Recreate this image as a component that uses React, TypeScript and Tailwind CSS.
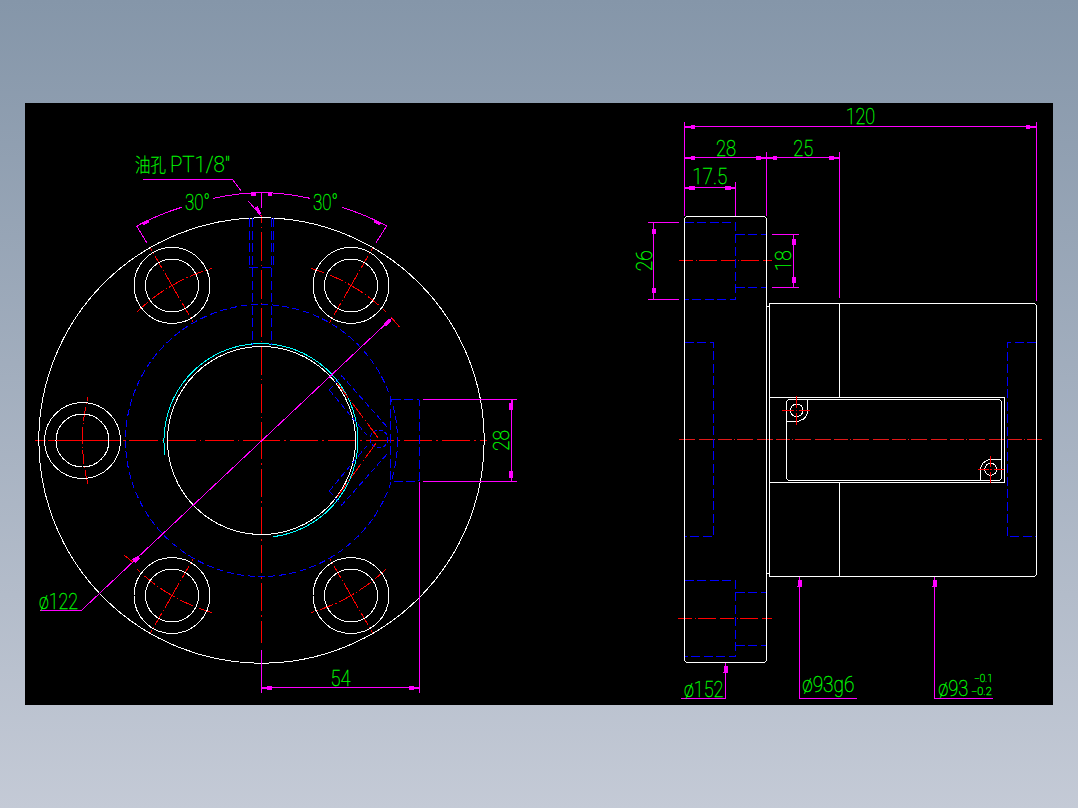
import React from "react";

const WHITE = "#ffffff";
const RED = "#ff0000";
const BLUE = "#0000ff";
const MAG = "#ff00ff";
const CY = "#00ffff";
const GREEN = "#00ff00";
const CX = 261.5;
const CY0 = 440.5;
const CENTER = "28.5 4 1.5 4";
const SHORT = "14 2.5 1 2.5";
const HID = "9 3.5";

type P = [number, number];
function Line({ p, c, d, o }: { p: P[]; c: string; d?: string; o?: number }) {
  return (
    <polyline
      points={p.map((q) => q.join(",")).join(" ")}
      fill="none"
      stroke={c}
      strokeWidth={1}
      strokeDasharray={d}
      strokeDashoffset={o}
    />
  );
}
function H({ x, y, c = MAG, d }: { x: [number, number]; y: number; c?: string; d?: string }) {
  return <Line p={[[x[0], y], [x[1], y]]} c={c} d={d} />;
}
function V({ x, y, c = MAG, d }: { x: number; y: [number, number]; c?: string; d?: string }) {
  return <Line p={[[x, y[0]], [x, y[1]]]} c={c} d={d} />;
}
// arrow: a slab plus a thicker stem running to the tip
function HS({ x1, x2, y, tip }: { x1: number; x2: number; y: number; tip?: number }) {
  return (
    <g>
      <rect x={x1} y={y - 2} width={x2 - x1} height={4} fill={MAG} />
      {tip !== undefined && (
        <rect x={Math.min(tip, x1)} y={y - 0.5} width={Math.abs(tip < x1 ? x1 - tip : tip - x2) + (tip < x1 ? 0 : x2 - x1)} height={2} fill={MAG} />
      )}
    </g>
  );
}
function VS({ x, y1, y2, tip }: { x: number; y1: number; y2: number; tip?: number }) {
  return (
    <g>
      <rect x={x - 2} y={y1} width={4} height={y2 - y1} fill={MAG} />
      {tip !== undefined && (
        <rect x={x - 0.5} y={Math.min(tip, y1)} width={2} height={tip < y1 ? y1 - tip : tip - y1} fill={MAG} />
      )}
    </g>
  );
}
function T({ x, y, w, s = 22, children, rot }: { x: number; y: number; w: number; s?: number; children: string; rot?: boolean }) {
  return (
    <text
      x={x}
      y={y}
      fontSize={s}
      fill={GREEN}
      stroke={GREEN}
      strokeWidth={0.3}
      textLength={w}
      lengthAdjust="spacingAndGlyphs"
      transform={rot ? `rotate(-90 ${x + w / 2} ${y})` : undefined}
    >
      {children}
    </text>
  );
}

function polar(r: number, deg: number): P {
  const a = (deg * Math.PI) / 180;
  return [CX + r * Math.cos(a), CY0 + r * Math.sin(a)];
}
function Arc({ r, a, b, c, d }: { r: number; a: number; b: number; c: string; d?: string }) {
  const s = polar(r, a);
  const e = polar(r, b);
  return (
    <path
      d={`M${s[0]} ${s[1]}A${r} ${r} 0 ${Math.abs(b - a) > 180 ? 1 : 0} 1 ${e[0]} ${e[1]}`}
      fill="none"
      stroke={c}
      strokeWidth={1}
      strokeDasharray={d}
    />
  );
}

function Bolt({ deg }: { deg: number }) {
  const [x, y] = polar(179, deg);
  const a = polar(135.5, deg);
  const b = polar(223, deg);
  return (
    <g>
      <Line p={[polar(179, deg), a]} c={RED} d={SHORT} />
      <Line p={[polar(179, deg), b]} c={RED} d={SHORT} />
      <Arc r={179} a={deg} b={deg + 14} c={RED} d={SHORT} />
      <Arc r={179} a={deg - 14} b={deg} c={RED} d="14 2.5 1 2.5" />
      <circle cx={x} cy={y} r={26.5} fill="none" stroke={WHITE} />
      <circle cx={x} cy={y} r={38} fill="none" stroke={WHITE} />
    </g>
  );
}

function FrontView() {
  const m = (y: number) => 2 * CY0 - y;
  return (
    <g>
      <Line p={[[CX, CY0], [486.7, CY0]]} c={RED} d={CENTER} o={10} />
      <Line p={[[CX, CY0], [35, CY0]]} c={RED} d={CENTER} o={10} />
      <Line p={[[CX, CY0], [CX, 215]]} c={RED} d={CENTER} o={10} />
      <Line p={[[CX, CY0], [CX, 643]]} c={RED} d={CENTER} o={10} />

      {[-120, -60, 180, 120, 60].map((d) => (
        <Bolt key={d} deg={d} />
      ))}
      <Line p={[[390.7, 316.7], [399.3, 326.7]]} c={RED} />
      <Line p={[[124, 555], [133, 562.3]]} c={RED} />

      <circle cx={CX} cy={CY0} r={222.7} fill="none" stroke={WHITE} />
      <circle cx={CX} cy={CY0} r={94} fill="none" stroke={WHITE} />
      <path d="M165 455A97 97 0 1 1 273 536.8" fill="none" stroke={CY} />
      <circle cx={CX} cy={CY0} r={136} fill="none" stroke={BLUE} strokeDasharray="7 3.5" />

      {/* oil hole, top */}
      <V x={249} y={[218, 267.7]} c={BLUE} d={HID} />
      <V x={252.3} y={[218, 345]} c={BLUE} d={HID} />
      <V x={271} y={[218, 345]} c={BLUE} d={HID} />
      <V x={273.7} y={[218, 267.7]} c={BLUE} d={HID} />
      <H x={[249, 273.7]} y={267.7} c={BLUE} d={HID} />

      {/* oil hole, right */}
      <Line p={[[391.7, 399.3], [418, 399.3], [419.7, 401], [419.7, 480], [418, 481.3], [391.7, 481.3]]} c={BLUE} d={HID} />
      <V x={390.5} y={[396, 485]} c={BLUE} d={HID} />
      {[1, 0].map((k) => {
        const f = (y: number) => (k ? y : m(y));
        return (
          <g key={k}>
            <Line p={[[329.3, f(390)], [341.7, f(375.7)], [388.3, f(428.3)]]} c={BLUE} d="6 3" />
            <Line p={[[329.3, f(390)], [366.7, f(435)]]} c={BLUE} d="6 3" />
          </g>
        );
      })}
      <circle cx={379} cy={439} r={9} fill="none" stroke={BLUE} strokeDasharray="4 2" />
      <Line p={[[337.3, 383.3], [379, 439], [337.3, 496.7]]} c={RED} d="18 3 1 3" />

      {/* Ø122 */}
      <Line p={[[392, 318], [81, 610.8], [40, 610.8]]} c={MAG} />
      <polygon points="384,323 389,318.6 391,321 386,326.5" fill={MAG} />
      <polygon points="132,559 138,556 140,558.6 135,563" fill={MAG} />
      <T x={39} y={609} w={39}>ø122</T>

      {/* 28 */}
      <H x={[423, 517]} y={399.3} />
      <H x={[423, 517]} y={481.3} />
      <V x={511.3} y={[399.3, 481.3]} />
      <VS x={511.3} y1={403} y2={410} tip={400} />
      <VS x={511.3} y1={471} y2={478} />
      <T x={498.5} y={440.6} w={21} rot>28</T>

      {/* 54 */}
      <V x={419.3} y={[482, 693.3]} />
      <V x={261.5} y={[650, 693]} />
      <H x={[261.5, 419.3]} y={687.7} />
      <HS x1={267.3} x2={272} y={687.7} tip={262} />
      <HS x1={409} x2={414} y={687.7} tip={419} />
      <T x={330.5} y={685.7} w={20}>54</T>

      {/* 30° */}
      <V x={261.5} y={[192.5, 208]} />
      <path d="M213.3 198.3A248 248 0 0 1 261.5 192.5A248 248 0 0 1 310 198.3" fill="none" stroke={MAG} />
      <path d="M181.7 207.3A248 248 0 0 0 136.7 226" fill="none" stroke={MAG} />
      <path d="M341.7 207.3A248 248 0 0 1 386.7 226" fill="none" stroke={MAG} />
      <Line p={[[136.7, 226], [146.7, 242.7]]} c={MAG} />
      <Line p={[[386.7, 226], [376, 242.7]]} c={MAG} />
      <rect x={251} y={192} width={4.7} height={3.7} fill={MAG} />
      <rect x={267.7} y={192} width={4.7} height={3.7} fill={MAG} />
      <polygon points="142,223 148,219.5 149.5,222 143.5,225.5" fill={MAG} />
      <polygon points="375,219.5 381,223 379.5,225.5 373.5,222" fill={MAG} />
      <T x={185} y={210} w={25}>30°</T>
      <T x={313} y={210} w={25}>30°</T>

      {/* oil note */}
      <Line p={[[143.3, 179.3], [232.3, 179.3], [241, 190.7]]} c={MAG} />
      <Line p={[[248.3, 201], [261, 216]]} c={MAG} />
      <polygon points="254.5,208 257.5,206 261,213 260,215.5" fill={MAG} />
      <T x={135} y={171.7} w={31} s={19}>油孔</T>
      <T x={170} y={171.7} w={60}>PT1/8"</T>
    </g>
  );
}

function SideView() {
  return (
    <g>
      {/* center lines */}
      <H x={[679, 1041.7]} y={439.3} c="#e01818" d="16 3.5 16 3.5 14 2 1 2" />
      <H x={[679, 771.7]} y={260.3} c={RED} d={SHORT + " 18 4"} />
      <H x={[678, 771.7]} y={618.3} c={RED} d={SHORT + " 18 4"} />

      {/* flange */}
      <path d="M686.5 216.5H764.5L766.5 218.5V660.5L764.5 662.5H686.5L684.5 660.5V218.5Z" fill="none" stroke={WHITE} />
      {/* body */}
      <path d="M769.5 303.5H1034.5L1036.5 305.5V574.5L1034.5 576.5H769.5Z" fill="none" stroke={WHITE} />
      <H x={[766.5, 769.5]} y={306.5} c={WHITE} />
      <H x={[766.5, 769.5]} y={573.5} c={WHITE} />
      <V x={839.5} y={[303.5, 397.5]} c={WHITE} />
      <V x={839.5} y={[482.5, 576.5]} c={WHITE} />
      <path d="M769.5 397.5H1004.5V482.5H769.5" fill="none" stroke={WHITE} />
      <path d="M788.5 399.5H999.5L1001.5 401.5V478.5L999.5 480.5H788.5L786.5 478.5V401.5Z" fill="none" stroke={WHITE} />
      {/* keys */}
      <path d="M786.5 421.5H798L800 420.5A9.5 9.5 0 0 0 807.5 411V399.5" fill="none" stroke={WHITE} />
      <path d="M1001.5 459.5H990.5A10.5 10.5 0 0 0 980.5 470V480.5" fill="none" stroke={WHITE} />
      <circle cx={796.7} cy={410.3} r={6.3} fill="none" stroke={WHITE} />
      <circle cx={990.7} cy={469.3} r={6} fill="none" stroke={WHITE} />
      <H x={[782.3, 810]} y={410.5} c={RED} d="12 2 1 2" />
      <V x={796.5} y={[396, 425]} c={RED} d="12 2 1 2" />
      <H x={[978.3, 1004]} y={469.5} c={RED} d="11 2 1 2" />
      <V x={990.5} y={[456, 484]} c={RED} d="11 2 1 2" />

      {/* hidden */}
      <path d="M684.5 222.5H735.5V299.5H684.5" fill="none" stroke={BLUE} strokeDasharray={HID} />
      <path d="M735.5 234.5H766" fill="none" stroke={BLUE} strokeDasharray={HID} />
      <path d="M735.5 287.5H766" fill="none" stroke={BLUE} strokeDasharray={HID} />
      <path d="M684.5 580.5H735.5V656.5H684.5" fill="none" stroke={BLUE} strokeDasharray={HID} />
      <path d="M735.5 592.5H766" fill="none" stroke={BLUE} strokeDasharray={HID} />
      <path d="M735.5 645.5H766" fill="none" stroke={BLUE} strokeDasharray={HID} />
      <path d="M684.5 342.5H713.5V536.5H684.5" fill="none" stroke={BLUE} strokeDasharray={HID} />
      <path d="M1036 342.5H1007.5V536.5H1036" fill="none" stroke={BLUE} strokeDasharray={HID} />

      {/* 120 */}
      <H x={[684.5, 1036.5]} y={126.5} />
      <V x={684.5} y={[122, 216]} />
      <V x={1036.5} y={[121.5, 300.7]} />
      <HS x1={690.7} x2={695} y={126.5} tip={685} />
      <HS x1={1026} x2={1030} y={126.5} tip={1036} />
      <T x={845.7} y={124} w={29.5}>120</T>

      {/* 28 / 25 */}
      <H x={[684.5, 839.5]} y={157.5} />
      <V x={766.5} y={[152.3, 216]} />
      <V x={839.5} y={[152, 297.7]} />
      <HS x1={690.7} x2={695} y={157.5} tip={685} />
      <HS x1={756} x2={760.7} y={157.5} tip={766} />
      <HS x1={772.7} x2={777} y={157.5} tip={767} />
      <HS x1={829.3} x2={834} y={157.5} tip={839} />
      <T x={716} y={155.7} w={20}>28</T>
      <T x={793.3} y={155.7} w={20}>25</T>

      {/* 17.5 */}
      <H x={[684.5, 735.5]} y={187.5} />
      <V x={735.5} y={[182.3, 216]} />
      <HS x1={689.3} x2={695} y={187.5} tip={685} />
      <HS x1={725} x2={730.7} y={187.5} tip={735} />
      <T x={692.3} y={184.3} w={35}>17.5</T>

      {/* 26 */}
      <H x={[648, 679]} y={222.5} />
      <H x={[648, 679]} y={299.5} />
      <V x={653.5} y={[222.5, 299.5]} />
      <VS x={653.5} y1={229} y2={233.7} />
      <VS x={653.5} y1={288.3} y2={293} />
      <T x={641.5} y={260.7} w={21} rot>26</T>

      {/* 18 */}
      <H x={[772, 798.7]} y={234.5} />
      <H x={[772, 798.7]} y={287.5} />
      <V x={793.5} y={[234.5, 287.5]} />
      <VS x={793.5} y1={239.3} y2={245.3} />
      <VS x={793.5} y1={277} y2={282.7} />
      <T x={780.5} y={260.7} w={21} rot>18</T>

      {/* Ø152 */}
      <Line p={[[725.5, 662.5], [725.5, 698.5], [681, 698.5]]} c={MAG} />
      <VS x={725.5} y1={666} y2={672} />
      <H x={[723, 728]} y={672.5} />
      <T x={684} y={696.7} w={39.5}>ø152</T>

      {/* Ø93g6 */}
      <Line p={[[799.5, 576.7], [799.5, 698.5], [856.7, 698.5]]} c={MAG} />
      <VS x={799.5} y1={580} y2={586.5} />
      <H x={[797, 802]} y={586.5} />
      <T x={802.3} y={691.7} w={52}>ø93g6</T>

      {/* Ø93 */}
      <Line p={[[934.5, 576.7], [934.5, 698.5], [993.3, 698.5]]} c={MAG} />
      <VS x={934.5} y1={580} y2={586} />
      <H x={[932, 937]} y={586.5} />
      <T x={938.3} y={695.7} w={30}>ø93</T>
      <T x={974} y={682.3} w={18.7} s={10}>−0.1</T>
      <T x={971} y={695} w={20.7} s={10}>−0.2</T>
    </g>
  );
}

export default function App() {
  return (
    <div className="h-[808px] w-[1078px] overflow-hidden bg-linear-to-b from-[#8596a9] to-[#c4cad6] px-[25px] py-[103px]">
      <div className="h-[602px] w-[1028px] bg-black">
        <svg
          viewBox="25 103 1028 602"
          width={1028}
          height={602}
          shapeRendering="crispEdges"
          className="block font-['Roboto','Noto_Sans_CJK_SC',sans-serif] font-thin"
        >
          <FrontView />
          <SideView />
        </svg>
      </div>
    </div>
  );
}
